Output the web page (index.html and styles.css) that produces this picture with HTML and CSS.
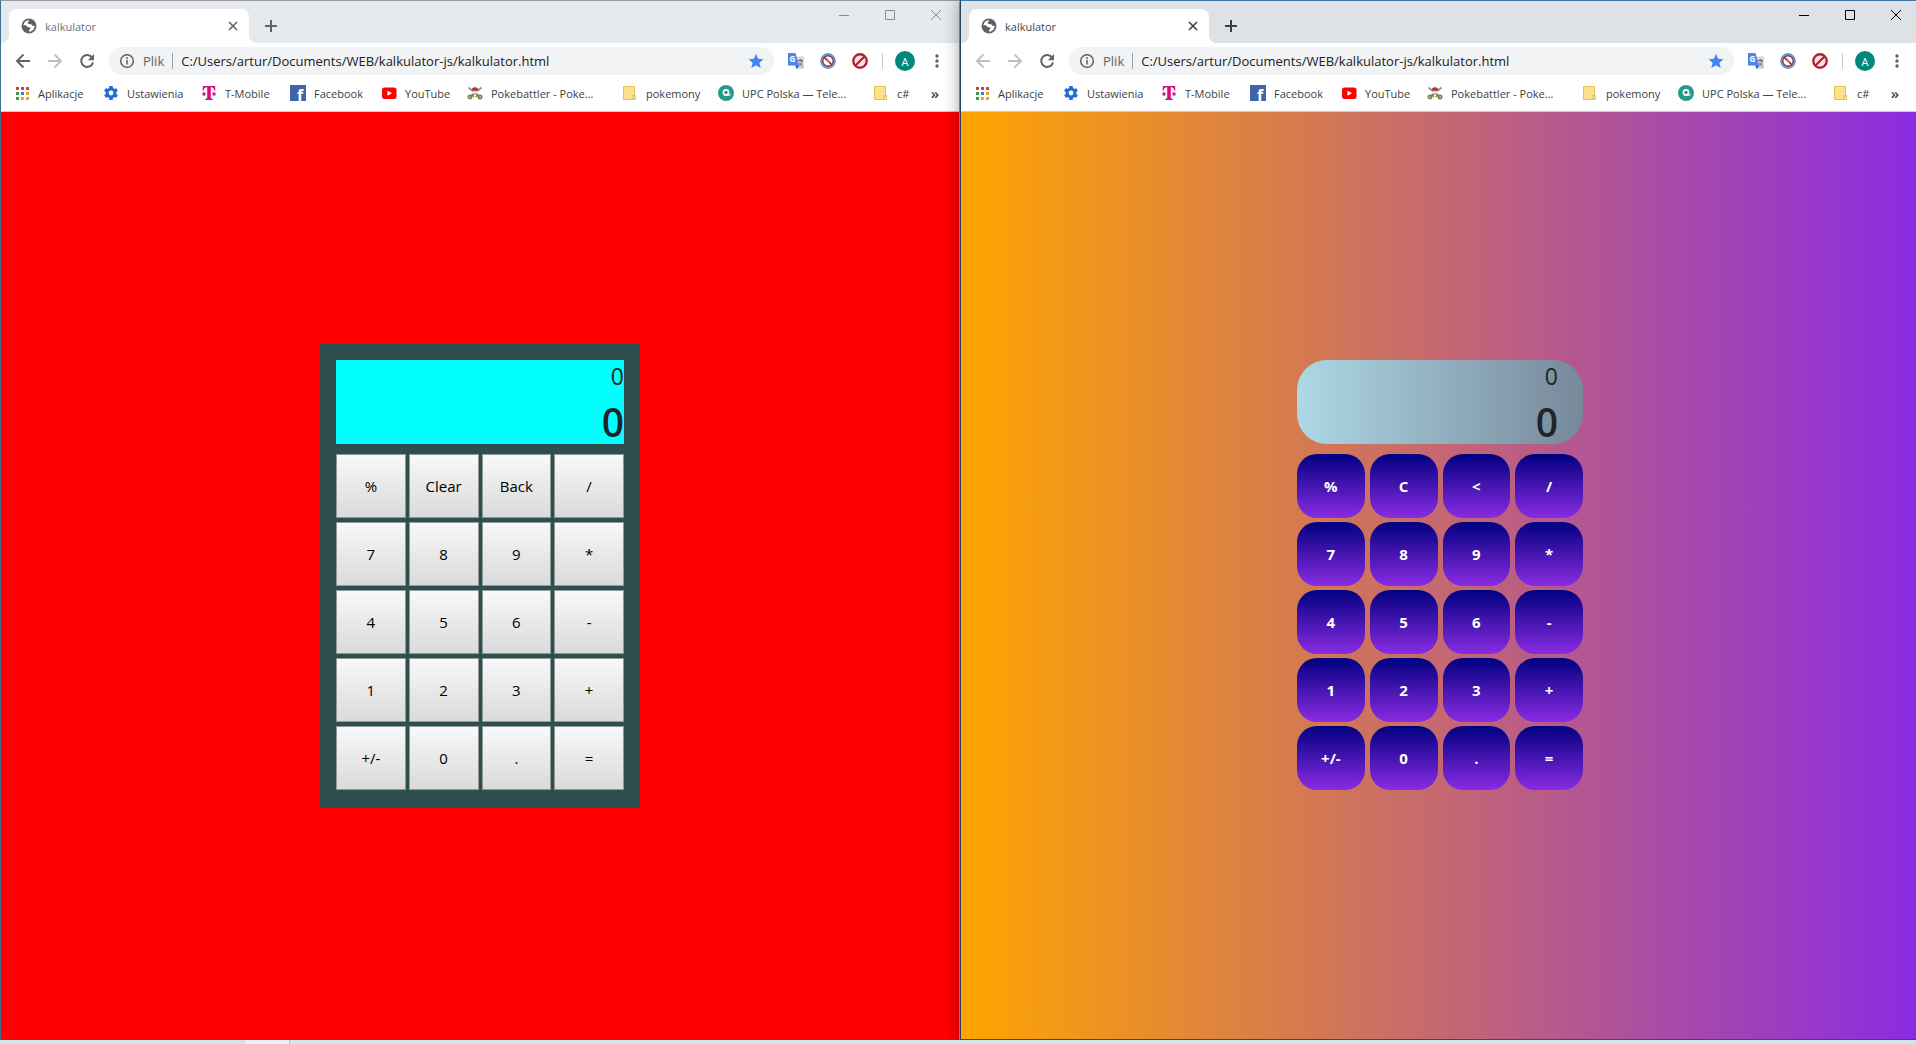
FILE: index.html
```
<!DOCTYPE html>
<html lang="pl">
<head>
<meta charset="utf-8">
<title>kalkulator</title>
<link rel="stylesheet" href="styles.css">
</head>
<body>
<svg class="sprite" aria-hidden="true">
  <symbol id="globe" viewBox="0 0 16 16"><circle cx="8" cy="8" r="7.5" fill="#5f6368"/><path d="M8.500 2.200 6.600 4.500 7.400 6l2.800.3 1.200 1.500 2.300.2A5.800 5.800 0 0 1 8 13.800v-1.600l1.500-1.400-.4-1.400-2.600-.5L5.300 7.600 2.300 7A5.800 5.800 0 0 1 8.500 2.200z" fill="#fff"/><path d="M9.500 3.500 12.600 5.500 11 6.200zM3 9l2.200 1.200.6 2.700A5 5 0 0 1 3 9z" fill="#5f6368"/></symbol>
  <symbol id="cross" viewBox="0 0 10 10"><path d="M1 1l8 8M9 1L1 9" fill="none" stroke="currentColor" stroke-width="1.600"/></symbol>
  <symbol id="plus" viewBox="0 0 12 12"><path d="M6 0v12M0 6h12" fill="none" stroke="currentColor" stroke-width="2"/></symbol>
  <symbol id="min" viewBox="0 0 10 10"><path d="M0 5.500h10" fill="none" stroke="currentColor"/></symbol>
  <symbol id="max" viewBox="0 0 10 10"><path d="M.5.5h9v9h-9z" fill="none" stroke="currentColor"/></symbol>
  <symbol id="close" viewBox="0 0 10 10"><path d="M0 0l10 10M10 0L0 10" fill="none" stroke="currentColor"/></symbol>
  <symbol id="back" viewBox="0 0 16 16"><path d="M15 8H2M8.500 1.500 2 8l6.500 6.500" fill="none" stroke="currentColor" stroke-width="1.900"/></symbol>
  <symbol id="reload" viewBox="0 0 16 16"><path d="M13.200 4.600A6 6 0 1 0 14 9.500" fill="none" stroke="currentColor" stroke-width="2"/><path d="M15 1v6.200H8.800z" fill="currentColor"/></symbol>
  <symbol id="info" viewBox="0 0 16 16"><circle cx="8" cy="8" r="6.300" fill="none" stroke="#5f6368" stroke-width="1.500"/><path d="M8 7v4.500M8 4.300v1.700" stroke="#5f6368" stroke-width="1.600"/></symbol>
  <symbol id="star" viewBox="0 0 16 16"><path d="M8 .8l2.100 5 5.400.4-4.100 3.500 1.300 5.300L8 12.200 3.300 15l1.300-5.300L.5 6.200l5.400-.4z" fill="#4285f4"/></symbol>
  <symbol id="translate" viewBox="0 0 16 16"><path d="M6 3.500h10V16H9z" fill="#d3d5d9"/><path d="M9.500 7.500h5.500M12.300 6v1.500M10.500 13c2-1.200 3-3 3.500-5.500M11 9.500l3.500 4" stroke="#5f6870" stroke-width="1" fill="none"/><path d="M0 0h7.500l3.500 12.500H0z" fill="#4a86ec"/><path d="M7 12.500h4L8.800 16z" fill="#2855b4"/><text x="1.500" y="9" font-size="8" font-weight="700" fill="#fff">G</text></symbol>
  <symbol id="blocklight" viewBox="0 0 16 16"><circle cx="8" cy="8" r="7" fill="#fff" stroke="#5b9bd8" stroke-width="1.800"/><circle cx="8" cy="8" r="5.300" fill="none" stroke="#8f2d35" stroke-width="1.500"/><path d="M4 4.200l8 7.600" stroke="#8f2d35" stroke-width="1.600"/><path d="M8 5v5" stroke="#d7a0a0"/></symbol>
  <symbol id="block" viewBox="0 0 16 16"><circle cx="8" cy="8" r="6.700" fill="#f7e8ea" stroke="#b3202f" stroke-width="2.400"/><path d="M12.200 3.800l-8.400 8.400" stroke="#b3202f" stroke-width="2.200"/></symbol>
  <symbol id="dots" viewBox="0 0 4 14"><g fill="#5f6368"><circle cx="2" cy="2" r="1.700"/><circle cx="2" cy="7" r="1.700"/><circle cx="2" cy="12" r="1.700"/></g></symbol>
  <symbol id="apps" viewBox="0 0 16 16"><path d="M2 2h3v3H2zM7 2h3v3H7zM12 2h3v3h-3z" fill="#d04437"/><path d="M2 7h3v3H2zM2 12h3v3H2z" fill="#3c9a56"/><path d="M7 7h3v3H7z" fill="#3b7de0"/><path d="M12 7h3v3h-3zM7 12h3v3H7zM12 12h3v3h-3z" fill="#dfa92b"/></symbol>
  <symbol id="gear" viewBox="0 0 16 16"><circle cx="8" cy="8" r="3.900" fill="none" stroke="#1f6fd8" stroke-width="3"/><path d="M8 1v2.500M8 12.500V15M2 4.500l2.200 1.300M11.800 10.200l2.200 1.300M14 4.500l-2.200 1.300M4.200 10.200 2 11.500" stroke="#1f6fd8" stroke-width="3.600"/></symbol>
  <symbol id="tmobile" viewBox="0 0 16 16"><g fill="#d5127b"><path d="M2 1h12l.5 4.500h-1C13 3 12 2.200 9.800 2.200v9.600c0 1.500.4 2 2 2.200v.9H4.200V14c1.600-.2 2-.7 2-2.200V2.200C4 2.200 3 3 2.500 5.500h-1zM1.500 7.500h3v3h-3zM11.500 7.500h3v3h-3z"/></g></symbol>
  <symbol id="facebook" viewBox="0 0 16 16"><path d="M0 0h16v16H0z" fill="#4063ad"/><text x="7" y="15.500" font-size="16" font-weight="700" fill="#fff">f</text></symbol>
  <symbol id="youtube" viewBox="0 0 16 16"><rect x="1" y="2.500" width="14.500" height="11.500" rx="2.500" fill="#f00"/><path d="M6.500 5.700v5L11 8.200z" fill="#fff"/></symbol>
  <symbol id="poke" viewBox="0 0 16 16"><path d="M1.500 2.500l12 10M14.500 2.500l-12 10" stroke="#8f8f9b" stroke-width="1.700"/><circle cx="8" cy="5.500" r="3.200" fill="#e9e4e4"/><path d="M4.800 5.500a3.200 3.200 0 0 1 6.400 0z" fill="#d4252f"/><path d="M4.800 5.700h6.400" stroke="#555" stroke-width=".7"/><g fill="none" stroke="#87803f" stroke-width="1.400"><circle cx="3" cy="12" r="1.800"/><circle cx="13" cy="12" r="1.800"/><path d="M5 9l2 3M11 9l-2 3"/></g></symbol>
  <symbol id="folder" viewBox="0 0 16 16"><path d="M1.500 1.500h11v9h1v4h-12z" fill="#fbe38d" stroke="#e6c250"/><path d="M11 14v-3.500h1.500" fill="none" stroke="#e0b93c"/></symbol>
  <symbol id="upc" viewBox="0 0 16 16"><circle cx="8" cy="8" r="8" fill="#27998e"/><circle cx="8" cy="7.500" r="2.600" fill="none" stroke="#fff" stroke-width="1.600"/><path d="M8.500 10h4" stroke="#fff" stroke-width="1.200"/></symbol>
</svg>

<main class="desktop">
  <section class="window window-idle" aria-label="Okno 1">
    <header class="tabstrip">
      <div class="tab">
        <svg class="icon"><use href="#globe"/></svg>
        <span class="tab-title">kalkulator</span>
        <button class="tab-close" aria-label="Zamknij kartę"><svg><use href="#cross"/></svg></button>
      </div>
      <button class="new-tab" aria-label="Nowa karta"><svg><use href="#plus"/></svg></button>
      <div class="controls">
        <button aria-label="Minimalizuj"><svg><use href="#min"/></svg></button>
        <button aria-label="Maksymalizuj"><svg><use href="#max"/></svg></button>
        <button aria-label="Zamknij"><svg><use href="#close"/></svg></button>
      </div>
    </header>
    <div class="toolbar">
      <button class="nav" aria-label="Wstecz"><svg class="icon"><use href="#back"/></svg></button>
      <button class="nav nav-off forward" aria-label="Dalej"><svg class="icon"><use href="#back"/></svg></button>
      <button class="nav" aria-label="Odśwież"><svg class="icon"><use href="#reload"/></svg></button>
      <div class="omnibox">
        <svg class="icon"><use href="#info"/></svg>
        <label class="scheme" for="url1">Plik</label>
        <input id="url1" class="url" type="text" value="C:/Users/artur/Documents/WEB/kalkulator-js/kalkulator.html">
        <svg class="icon"><use href="#star"/></svg>
      </div>
      <div class="extensions">
        <svg class="icon"><use href="#translate"/></svg>
        <svg class="icon"><use href="#blocklight"/></svg>
        <svg class="icon"><use href="#block"/></svg>
      </div>
      <button class="avatar">A</button>
      <button class="menu" aria-label="Menu"><svg><use href="#dots"/></svg></button>
    </div>
    <nav class="bookmarks">
      <a href="#"><svg class="icon"><use href="#apps"/></svg>Aplikacje</a>
      <a href="#"><svg class="icon"><use href="#gear"/></svg>Ustawienia</a>
      <a href="#"><svg class="icon"><use href="#tmobile"/></svg>T-Mobile</a>
      <a href="#"><svg class="icon"><use href="#facebook"/></svg>Facebook</a>
      <a href="#"><svg class="icon"><use href="#youtube"/></svg>YouTube</a>
      <a href="#"><svg class="icon"><use href="#poke"/></svg>Pokebattler - Poke...</a>
      <a href="#"><svg class="icon"><use href="#folder"/></svg>pokemony</a>
      <a href="#"><svg class="icon"><use href="#upc"/></svg>UPC Polska — Tele...</a>
      <a href="#"><svg class="icon"><use href="#folder"/></svg>c#</a>
      <button class="more" aria-label="Więcej zakładek">»</button>
    </nav>
    <div class="page page-red">
      <div class="calc calc-classic">
        <div class="display"><div class="previous">0</div><div class="current">0</div></div>
        <div class="keys">
          <button>%</button><button>Clear</button><button>Back</button><button>/</button>
          <button>7</button><button>8</button><button>9</button><button>*</button>
          <button>4</button><button>5</button><button>6</button><button>-</button>
          <button>1</button><button>2</button><button>3</button><button>+</button>
          <button>+/-</button><button>0</button><button>.</button><button>=</button>
        </div>
      </div>
    </div>
  </section>

  <section class="window window-active" aria-label="Okno 2">
    <header class="tabstrip">
      <div class="tab">
        <svg class="icon"><use href="#globe"/></svg>
        <span class="tab-title">kalkulator</span>
        <button class="tab-close" aria-label="Zamknij kartę"><svg><use href="#cross"/></svg></button>
      </div>
      <button class="new-tab" aria-label="Nowa karta"><svg><use href="#plus"/></svg></button>
      <div class="controls">
        <button aria-label="Minimalizuj"><svg><use href="#min"/></svg></button>
        <button aria-label="Maksymalizuj"><svg><use href="#max"/></svg></button>
        <button aria-label="Zamknij"><svg><use href="#close"/></svg></button>
      </div>
    </header>
    <div class="toolbar">
      <button class="nav nav-off" aria-label="Wstecz"><svg class="icon"><use href="#back"/></svg></button>
      <button class="nav nav-off forward" aria-label="Dalej"><svg class="icon"><use href="#back"/></svg></button>
      <button class="nav" aria-label="Odśwież"><svg class="icon"><use href="#reload"/></svg></button>
      <div class="omnibox">
        <svg class="icon"><use href="#info"/></svg>
        <label class="scheme" for="url2">Plik</label>
        <input id="url2" class="url" type="text" value="C:/Users/artur/Documents/WEB/kalkulator-js/kalkulator.html">
        <svg class="icon"><use href="#star"/></svg>
      </div>
      <div class="extensions">
        <svg class="icon"><use href="#translate"/></svg>
        <svg class="icon"><use href="#blocklight"/></svg>
        <svg class="icon"><use href="#block"/></svg>
      </div>
      <button class="avatar">A</button>
      <button class="menu" aria-label="Menu"><svg><use href="#dots"/></svg></button>
    </div>
    <nav class="bookmarks">
      <a href="#"><svg class="icon"><use href="#apps"/></svg>Aplikacje</a>
      <a href="#"><svg class="icon"><use href="#gear"/></svg>Ustawienia</a>
      <a href="#"><svg class="icon"><use href="#tmobile"/></svg>T-Mobile</a>
      <a href="#"><svg class="icon"><use href="#facebook"/></svg>Facebook</a>
      <a href="#"><svg class="icon"><use href="#youtube"/></svg>YouTube</a>
      <a href="#"><svg class="icon"><use href="#poke"/></svg>Pokebattler - Poke...</a>
      <a href="#"><svg class="icon"><use href="#folder"/></svg>pokemony</a>
      <a href="#"><svg class="icon"><use href="#upc"/></svg>UPC Polska — Tele...</a>
      <a href="#"><svg class="icon"><use href="#folder"/></svg>c#</a>
      <button class="more" aria-label="Więcej zakładek">»</button>
    </nav>
    <div class="page page-gradient">
      <div class="calc calc-round">
        <div class="display"><div class="previous">0</div><div class="current">0</div></div>
        <div class="keys">
          <button>%</button><button>C</button><button>&lt;</button><button>/</button>
          <button>7</button><button>8</button><button>9</button><button>*</button>
          <button>4</button><button>5</button><button>6</button><button>-</button>
          <button>1</button><button>2</button><button>3</button><button>+</button>
          <button>+/-</button><button>0</button><button>.</button><button>=</button>
        </div>
      </div>
    </div>
  </section>
</main>
<footer class="taskbar"><span class="task"></span></footer>
</body>
</html>
```
FILE: styles.css
```
* { box-sizing: border-box; }

body {
  margin: 0;
  height: 100vh;
  display: flex;
  flex-direction: column;
  overflow: hidden;
  font-family: "Open Sans", "Noto Sans", sans-serif;
  font-size: 11px;
  color: #3c4043;
}

button {
  padding: 0;
  border: 0;
  background: none;
  font: inherit;
  color: inherit;
}

svg { display: block; flex: none; }
.sprite { display: none; }
.icon { width: 16px; height: 16px; }

/* Desktop: two windows side by side, the second runs slightly off screen */
.desktop {
  flex: 1;
  min-height: 0;
  display: flex;
  overflow: hidden;
}

.window {
  flex: none;
  width: calc(50% + 2px);
  display: flex;
  flex-direction: column;
  background: #fff;
  border: 1px solid #9a9ca3;
  border-left-color: #3f6f91;
  border-bottom-color: #7c3b4a;
}

.window-idle { --strip: #e7eaed; --control: #8b8d90; --tab-text: #6f7378; --tab-icon: #5f6368; }

.window-active {
  --strip: #dee1e6;
  --control: #000;
  --tab-text: #45484c;
  --tab-icon: #3c4043;
  z-index: 1;
  border-color: #3f76ab #26425c #4b4a35;
  box-shadow: 0 0 16px rgba(0, 0, 0, 0.4);
}

/* Tab strip */
.tabstrip {
  height: 42px;
  flex: none;
  display: flex;
  align-items: flex-end;
  padding-left: 8px;
  background: var(--strip);
}

.tab {
  position: relative;
  width: 240px;
  height: 34px;
  display: flex;
  align-items: center;
  gap: 8px;
  padding: 0 10px 0 12px;
  border-radius: 8px 8px 0 0;
  background: #fff;
  color: var(--tab-text);
}

.tab::before,
.tab::after {
  content: "";
  position: absolute;
  bottom: 0;
  width: 8px;
  height: 8px;
}

.tab::before { right: 100%; background: radial-gradient(circle at 0 0, transparent 8px, #fff 8px); }
.tab::after { left: 100%; background: radial-gradient(circle at 100% 0, transparent 8px, #fff 8px); }
.tab-title { flex: 1; }
.tab-close { width: 12px; color: var(--tab-icon); }
.tab-close svg { width: 10px; height: 10px; margin: auto; }
.new-tab { height: 34px; margin-left: 16px; color: var(--tab-icon); }
.new-tab svg { width: 12px; height: 12px; }

.controls {
  align-self: flex-start;
  display: flex;
  margin-left: auto;
  color: var(--control);
}

.controls button { width: 46px; height: 28px; }
.controls svg { width: 10px; height: 10px; margin: auto; }

/* Address row */
.toolbar {
  flex: none;
  height: 36px;
  display: flex;
  align-items: center;
  padding: 0 20px 0 14px;
  color: #5f6368;
}

.nav { margin-right: 16px; }
.nav-off { color: #bcbec1; }
.forward svg { transform: scaleX(-1); }

.omnibox {
  flex: 1;
  height: 28px;
  margin-left: -2px;
  display: flex;
  align-items: center;
  padding: 0 10px;
  border-radius: 14px;
  background: #f1f3f4;
  font-size: 13px;
}

.scheme {
  margin: 0 8px;
  padding-right: 8px;
  border-right: 1px solid #9aa0a6;
  line-height: 16px;
}

.url {
  flex: 1;
  min-width: 0;
  padding: 0;
  border: 0;
  background: none;
  font: inherit;
  color: #202124;
}

.extensions {
  display: flex;
  gap: 16px;
  margin-left: 14px;
  padding-right: 14px;
  border-right: 1px solid #c4c7ca;
}

.avatar {
  width: 20px;
  height: 20px;
  margin: 0 20px 0 12px;
  border-radius: 50%;
  background: #00897b;
  color: #fff;
}

.menu svg { width: 4px; height: 14px; }

/* Bookmark bar */
.bookmarks {
  flex: none;
  height: 33px;
  display: grid;
  grid-template-columns: 89px 98px 89px 91px 86px 155px 96px 155px 1fr auto;
  align-items: center;
  padding: 0 20px 4px 13px;
  border-bottom: 1px solid #c9cacc;
}

.bookmarks a {
  display: flex;
  align-items: center;
  gap: 8px;
  color: inherit;
  text-decoration: none;
  white-space: nowrap;
}

.more { font-size: 15px; line-height: 16px; font-weight: 600; }

/* Page area */
.page {
  flex: 1;
  display: grid;
  place-items: center;
}

.page-red { background: #f00; }
.page-gradient { background: linear-gradient(to right, orange, blueviolet); }

.calc {
  --gap: 3px;
  width: 320px;
  padding: 16px 16px 18px;
}

.calc-classic { background: darkslategray; }
.calc-round { --gap: 5px; padding: 16px 17px 18px; }

.display {
  height: 84px;
  margin-bottom: 10px;
  text-align: right;
  color: #212529;
}

.previous { font-size: 23px; line-height: 32px; font-weight: 500; }
.current { font-size: 39px; line-height: 60px; font-weight: 600; }
.calc-classic .display { background: aqua; }

.calc-round .display {
  padding-right: 25px;
  border-radius: 30px;
  background: linear-gradient(to right, lightblue, lightslategray);
}

.keys {
  display: grid;
  grid-template-columns: repeat(4, 1fr);
  grid-auto-rows: 64px;
  gap: 4px var(--gap);
  font-size: 15px;
}

.calc-classic button {
  border: 1px solid #8e9999;
  background: linear-gradient(#f8f8f8, #dadada);
  color: #000;
}

.calc-round button {
  border-radius: 20px;
  background: linear-gradient(navy, blueviolet);
  color: #fff;
  font-weight: 700;
}

/* Taskbar edge */
.taskbar {
  flex: none;
  height: 4px;
  display: flex;
  padding-left: 245px;
  background: #cfe6ea;
}

.task { width: 45px; background: #e9f4fa; border-right: 1px solid #b3c4cb; }
```
